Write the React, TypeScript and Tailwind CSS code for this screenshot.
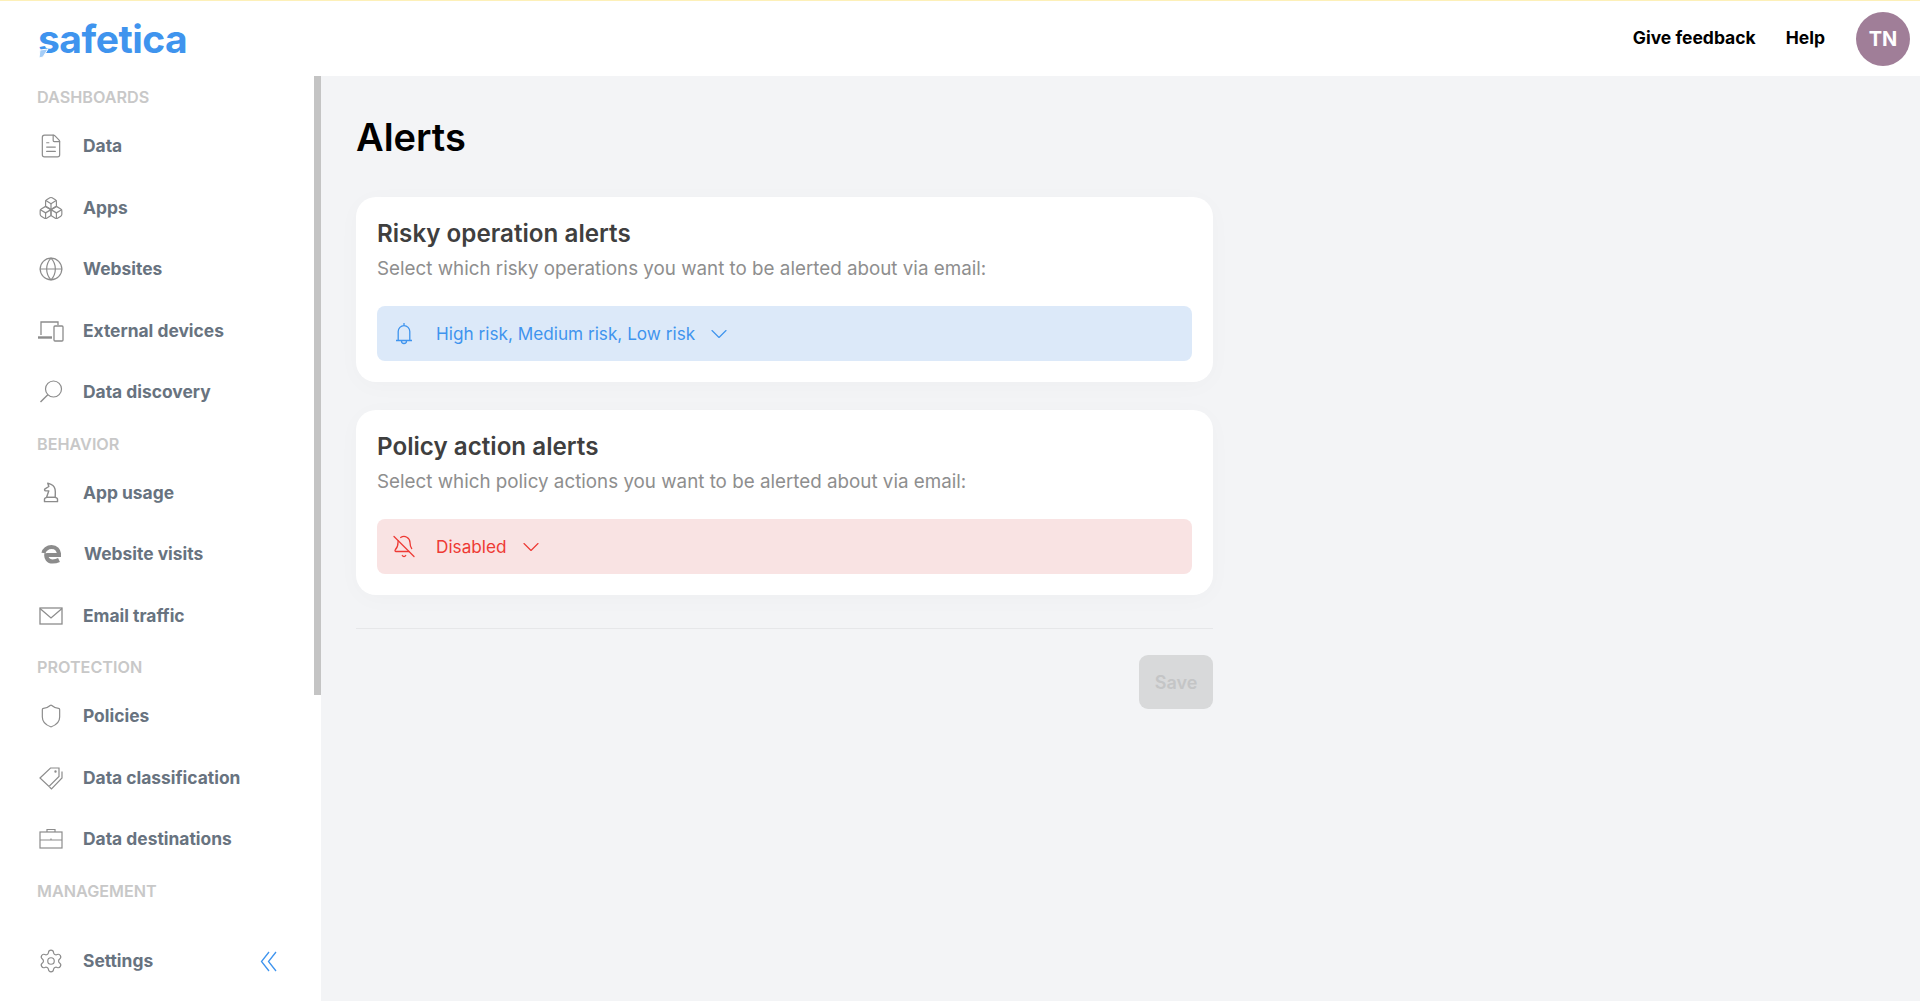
import { BellOff, Boxes, ChevronDown, FileText, Globe, Settings, Shield } from 'lucide-react';
import { TbChessKnight } from 'react-icons/tb';

const iconClass = 'w-[26px] h-[26px] text-[#8c8c8c]';

function DevicesIcon() {
  return (
    <svg viewBox="0 0 28 22" className="w-[28px] h-[22px] text-[#8c8c8c]" fill="none" stroke="currentColor" strokeWidth="1.3">
      <path d="M4 15V2h17v3" />
      <path d="M1 17.5h14" strokeWidth="2.4" />
      <rect x="17" y="6" width="9" height="15" rx="1" />
    </svg>
  );
}

function CaseIcon() {
  return (
    <svg viewBox="0 0 24 22" className="w-[24px] h-[22px] text-[#8c8c8c]" fill="none" stroke="currentColor" strokeWidth="1.2">
      <rect x="1" y="4" width="22" height="16" />
      <path d="M1 12h22M8 4V1.5h8V4M12 10.5v1" />
    </svg>
  );
}

function LensIcon() {
  return (
    <svg viewBox="0 0 24 24" className="w-[24px] h-[24px] text-[#8c8c8c]" fill="none" stroke="currentColor" strokeWidth="1.2">
      <circle cx="14.5" cy="9" r="8" />
      <path d="M8.8 14.8 1.5 22" strokeWidth="1.4" />
    </svg>
  );
}

function MailIcon() {
  return (
    <svg viewBox="0 0 24 18" className="w-[24px] h-[18px] text-[#8c8c8c]" fill="none" stroke="currentColor" strokeWidth="1.3">
      <rect x="1" y="1" width="22" height="16" />
      <path d="M1 1.5 12 11 23 1.5" />
    </svg>
  );
}

function TagsIcon() {
  return (
    <svg viewBox="0 0 24 24" className="w-[24px] h-[24px] text-[#8c8c8c]" fill="none" stroke="currentColor" strokeWidth="1.2">
      <path d="M1 12 11.5 2H20v8.5L10 20.5z" />
      <circle cx="16.5" cy="5.5" r="0.6" />
      <path d="M23 5.5v6.5L12.5 23l-2-2" />
    </svg>
  );
}

function EdgeIcon() {
  return (
    <svg viewBox="0 0 20 20" className="w-[20px] h-[20px] text-[#8c8c8c]" fill="none" stroke="currentColor">
      <path d="M5.5 11h12.5C18 6 15 3 10.5 3 6.5 3 3 6 2.5 9M5.5 9.5c-1 5 2 8 6 8 2.5 0 4.5-.5 6.5-1.5" strokeWidth="4.2" />
    </svg>
  );
}

function BellIcon() {
  return (
    <svg viewBox="0 0 18 24" className="w-[18px] h-[24px]" fill="none" stroke="currentColor" strokeWidth="1.3">
      <path d="M9 1v2.5M3.2 18V9.5a5.8 5.8 0 0 1 11.6 0V18M1 18.5h16" />
      <path d="M6.5 19a2.5 2.5 0 0 0 5 0" />
    </svg>
  );
}

function CollapseIcon() {
  return (
    <svg viewBox="0 0 17 21" className="w-[17px] h-[21px] text-[#3f94ee]" fill="none" stroke="currentColor" strokeWidth="1.3">
      <path d="M9 1 1.5 10.5 9 20M16 1 8.5 10.5 16 20" />
    </svg>
  );
}

function NavRow({ icon, label, gap = 'pl-[83px]' }: { icon: React.ReactNode; label: string; gap?: string }) {
  return (
    <div className={`relative flex items-center h-[61.5px] ${gap}`}>
      <span className="absolute left-[37px] w-[28px] h-[28px] flex items-center justify-center">{icon}</span>
      <span className="text-[17.4px] font-bold text-[#68737f]">{label}</span>
    </div>
  );
}

function SectionLabel({ children, mt }: { children: string; mt: string }) {
  return <div className={`h-[22px] leading-[22px] pl-[37px] mb-[7.5px] text-[16.2px] font-semibold text-[#c8c8c8] ${mt}`}>{children}</div>;
}

function AlertCard({ title, text, tone, value }: { title: string; text: string; tone: 'blue' | 'red'; value: string }) {
  const blue = tone === 'blue';
  return (
    <div className="bg-white rounded-[20px] px-[21px] pt-[21px] pb-[21px] shadow-[0_4px_24px_rgba(0,0,0,0.025)]">
      <h2 className="text-[24.2px] leading-[32px] font-semibold text-[#3f3f3f]">{title}</h2>
      <p className="mt-[7px] text-[18.8px] leading-[24px] text-[#8e8e8e]">{text}</p>
      <div className={`mt-[25px] h-[55px] rounded-[8px] flex items-center pl-[15px] ${blue ? 'bg-[#dce9f9] text-[#3f94ee]' : 'bg-[#f9e3e3] text-[#ee3a34]'}`}>
        <span className="w-[24px] h-[24px] flex items-center justify-center">
          {blue ? <BellIcon /> : <BellOff className="w-[25px] h-[25px]" strokeWidth={1.3} />}
        </span>
        <span className="ml-[20px] text-[17.2px]">{value}</span>
        <ChevronDown className="ml-[10px] w-[28px] h-[28px]" strokeWidth={1} />
      </div>
    </div>
  );
}

export default function App() {
  return (
    <div className="h-screen overflow-hidden flex flex-col bg-white font-['Inter',sans-serif]">
      {/* Top line + header */}
      <div className="h-[1px] bg-[#fdf0b8] shrink-0" />
      <header className="h-[75px] shrink-0 flex items-center justify-between pl-[38px] pr-[10px]">
        <div className="relative text-[39px] leading-none font-bold tracking-[-0.5px] text-[#3f94ee] -mt-[1px]">
          safetica
          <svg viewBox="0 0 11 11" className="absolute left-[0px] bottom-[-1px] w-[11px] h-[11px]">
            <path d="M2 2 10 1 5 9 1 10z" fill="#a5cdf7" stroke="#ffffff" strokeWidth="1" />
          </svg>
        </div>
        <div className="flex items-center">
          <span className="text-[17.5px] font-bold text-black">Give feedback</span>
          <span className="ml-[30px] text-[17.5px] font-bold text-black">Help</span>
          <div className="ml-[31px] w-[54px] h-[54px] rounded-full bg-[#a07e98] flex items-center justify-center text-[20px] font-bold text-white">TN</div>
        </div>
      </header>

      <div className="flex flex-1 min-h-0">
        {/* Sidebar */}
        <aside className="relative w-[321px] shrink-0 flex flex-col pt-[10px]">
          <div className="absolute right-0 top-0 w-[7px] h-[619px] bg-[#c4c4c4]" />
          <SectionLabel mt="">DASHBOARDS</SectionLabel>
          <NavRow icon={<FileText className={iconClass} strokeWidth={1.1} />} label="Data" />
          <NavRow icon={<Boxes className={iconClass} strokeWidth={1.1} />} label="Apps" />
          <NavRow icon={<Globe className={iconClass} strokeWidth={1.1} />} label="Websites" />
          <NavRow icon={<DevicesIcon />} label="External devices" />
          <NavRow icon={<LensIcon />} label="Data discovery" />
          <SectionLabel mt="mt-[9.5px]">BEHAVIOR</SectionLabel>
          <NavRow icon={<TbChessKnight className={iconClass} style={{ strokeWidth: 1.3 }} />} label="App usage" />
          <NavRow icon={<EdgeIcon />} label="Website visits" gap="pl-[84px]" />
          <NavRow icon={<MailIcon />} label="Email traffic" />
          <SectionLabel mt="mt-[9.5px]">PROTECTION</SectionLabel>
          <NavRow icon={<Shield className={iconClass} strokeWidth={1.1} />} label="Policies" />
          <NavRow icon={<TagsIcon />} label="Data classification" />
          <NavRow icon={<CaseIcon />} label="Data destinations" />
          <SectionLabel mt="mt-[10px]">MANAGEMENT</SectionLabel>
          <div className="mt-[21px] flex items-center justify-between pr-[44px]">
            <div className="flex-1">
              <NavRow icon={<Settings className={iconClass} strokeWidth={1.1} />} label="Settings" />
            </div>
            <CollapseIcon />
          </div>
        </aside>

        {/* Main */}
        <main className="flex-1 bg-[#f3f4f6] pl-[35px] pt-[38px]">
          <div className="w-[857px]">
            <h1 className="text-[38px] leading-[46px] font-semibold text-black">Alerts</h1>
            <div className="mt-[37px] flex flex-col gap-[28px]">
              <AlertCard
                title="Risky operation alerts"
                text="Select which risky operations you want to be alerted about via email:"
                tone="blue"
                value="High risk, Medium risk, Low risk"
              />
              <AlertCard
                title="Policy action alerts"
                text="Select which policy actions you want to be alerted about via email:"
                tone="red"
                value="Disabled"
              />
            </div>
            <div className="mt-[33px] h-[1px] bg-[#e6e7e9]" />
            <div className="mt-[26px] flex justify-end">
              <button className="w-[74px] h-[54px] rounded-[9px] bg-[#d8d9da] text-[18px] font-semibold text-[#c4c5c6]">Save</button>
            </div>
          </div>
        </main>
      </div>
    </div>
  );
}
